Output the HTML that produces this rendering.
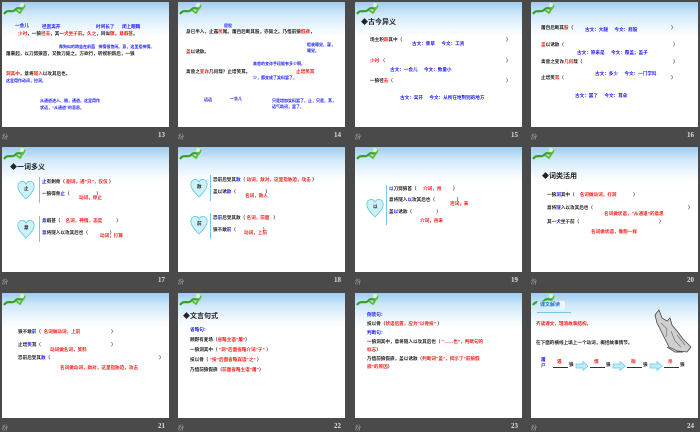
<!DOCTYPE html>
<html><head><meta charset="utf-8">
<style>
*{margin:0;padding:0;box-sizing:border-box}
body{width:700px;height:431px;background:#4a4a4a;position:relative;overflow:hidden;font-family:"Liberation Sans","Noto Sans CJK SC",sans-serif}
.s{position:absolute;width:167px;height:125px;background:linear-gradient(#9fcdef 0px,#cfe8f9 12px,#f4fafe 28px,#fff 36px);overflow:hidden}
.v{position:absolute;left:0;top:0}
.f{position:absolute;font-size:6px;color:#ccc;font-family:"Liberation Serif","Noto Serif CJK SC",serif}
.n{position:absolute;font-size:7px;color:#ddd;font-weight:bold;font-family:"Liberation Serif",serif}
.t{position:absolute;font-size:4.6px;white-space:nowrap;font-weight:bold;color:#222;line-height:1}
.b{color:#1a1aff}.r{color:#f5201a}
.h{font-size:7px;font-weight:bold}
.br{position:absolute;width:2px;border-left:1px solid #6ccbe6}
</style></head><body>
<svg width="0" height="0" style="position:absolute"><defs>
<g id="vine"><path d="M2 12 C6 6 10 12 14 7 C17 4 19 9 22 5" stroke="#3aa02a" stroke-width="2.2" fill="none"/><path d="M14 8 L18 11 L23 3" stroke="#58c030" stroke-width="1.8" fill="none"/><circle cx="20" cy="3" r="2" fill="#dff5c0"/></g>
<g id="heart"><path d="M9 19 C3 13 0 9 1 5 C2 1 7 0 9 4 C11 0 16 1 17 5 C18 9 15 13 9 19 Z" fill="#cdf2f8" stroke="#5ec8e2" stroke-width="0.8"/></g>
</defs></svg>

<!-- Row 1 -->
<div class="s" style="left:2px;top:2px"><svg class="v" width="26" height="14"><use href="#vine"/></svg>
<div class="t b" style="left:13px;top:22px">一会儿</div><div class="t b" style="left:40px;top:23px">径直离开</div><div class="t b" style="left:94px;top:23px">时间长了</div><div class="t b" style="left:120px;top:23px">闭上眼睛</div>
<div class="t" style="left:16px;top:30px"><span class="r">少时</span>，一狼<span class="r">径去</span>，其一<span class="r">犬坐于前</span>。<span class="r">久之</span>，目似<span class="r">瞑</span>，<span class="r">意暇甚</span>。</div>
<div class="t b" style="left:57px;top:43px;font-size:4px">像狗似的蹲坐在前面 &nbsp; 神情很悠闲。意，这里指神情。</div>
<div class="t" style="left:4px;top:50px">屠暴起，以刀劈狼首，又数刀毙之。方欲行，转视积薪后，一狼</div>
<div class="t" style="left:4px;top:70px"><span class="r">洞其中</span>，意将<span class="r">隧入</span>以攻其后也。</div>
<div class="t b" style="left:4px;top:77px;font-size:4px">这里用作动词，挖洞。</div>
<div class="t b" style="left:38px;top:97px;font-size:4px">从通道进入。隧，通道。这里用作</div><div class="t b" style="left:38px;top:104px;font-size:4px">状语，“从通道”的意思。</div>
</div>
<div class="f" style="left:2px;top:132px">汾</div><div class="n" style="left:158px;top:131px">13</div>

<div class="s" style="left:178px;top:2px"><svg class="v" width="26" height="14"><use href="#vine"/></svg>
<div class="t b" style="left:46px;top:22px;font-size:4px">屁股</div>
<div class="t" style="left:8px;top:28px">身已半入，止露<span class="r">尻</span>尾。屠自后断其股，亦毙之。乃悟前狼<span class="r">假寐</span>，</div>
<div class="t b" style="left:129px;top:41px;font-size:4px">假装睡觉。寐，</div><div class="t b" style="left:129px;top:47px;font-size:4px">睡觉。</div>
<div class="t" style="left:8px;top:48px"><span class="r">盖</span>以诱敌。</div>
<div class="t b" style="left:75px;top:60px;font-size:4px">禽兽的变诈手段能有多少啊。</div>
<div class="t" style="left:8px;top:68px">禽兽之<span class="r">变诈</span>几何哉？止增笑耳。</div><div class="t r" style="left:118px;top:68px">止增笑耳</div>
<div class="t b" style="left:75px;top:74px;font-size:4px">少，都变成了笑料罢了。</div>
<div class="t b" style="left:26px;top:96px;font-size:4px">语语</div><div class="t b" style="left:52px;top:95px;font-size:4px">一会儿</div>
<div class="t b" style="left:94px;top:97px;font-size:4px">只是增加笑料罢了。止，只是。耳，</div><div class="t b" style="left:94px;top:103px;font-size:4px">语气助词，罢了。</div>
</div>
<div class="f" style="left:178px;top:132px">汾</div><div class="n" style="left:334px;top:131px">14</div>

<div class="s" style="left:355px;top:2px"><svg class="v" width="26" height="14"><use href="#vine"/></svg>
<div class="t h" style="left:6px;top:17px">◆古今异义</div>
<div class="t" style="left:15px;top:36px">场主积<span class="r">薪</span>其中（</div><div class="t b" style="left:57px;top:40px">古文：柴草 &nbsp; &nbsp; 今文：工资</div><div class="t" style="left:151px;top:36px">）</div>
<div class="t r" style="left:15px;top:57px">少时 <span style="color:#222">（</span></div><div class="t" style="left:151px;top:57px">）</div>
<div class="t b" style="left:35px;top:66px">古文：一会儿 &nbsp; &nbsp; 今文：数量小</div>
<div class="t" style="left:15px;top:77px">一狼径<span class="r">去</span>（</div><div class="t" style="left:151px;top:77px">）</div>
<div class="t b" style="left:45px;top:94px">古文：离开 &nbsp; &nbsp; 今文：从所在地到别的地方</div>
</div>
<div class="f" style="left:355px;top:132px">汾</div><div class="n" style="left:511px;top:131px">15</div>

<div class="s" style="left:531px;top:2px"><svg class="v" width="26" height="14"><use href="#vine"/></svg>
<div class="t" style="left:10px;top:24px">屠自后断其<span class="r">股</span>（</div><div class="t b" style="left:54px;top:26px">古文：大腿 &nbsp; &nbsp; 今文：屁股</div><div class="t" style="left:140px;top:24px">）</div>
<div class="t" style="left:10px;top:41px"><span class="r">盖</span>以诱敌（</div><div class="t" style="left:142px;top:41px">）</div>
<div class="t b" style="left:46px;top:49px">古文：原来是 &nbsp; &nbsp; 今文：覆盖；盖子</div>
<div class="t" style="left:10px;top:58px">禽兽之变诈<span class="r">几何</span>哉（</div><div class="t" style="left:142px;top:58px">）</div>
<div class="t b" style="left:64px;top:70px">古文：多少 &nbsp; &nbsp; 今文：一门学科</div>
<div class="t" style="left:10px;top:74px">止增笑<span class="r">耳</span>（</div><div class="t" style="left:140px;top:74px">）</div>
<div class="t b" style="left:44px;top:92px">古文：罢了 &nbsp; &nbsp; 今文：耳朵</div>
</div>
<div class="f" style="left:531px;top:132px">汾</div><div class="n" style="left:687px;top:131px">16</div>

<!-- Row 2 -->
<div class="s" style="left:2px;top:147px"><svg class="v" width="26" height="14"><use href="#vine"/></svg>
<div class="t h" style="left:8px;top:17px">◆一词多义</div>
<svg style="position:absolute;left:15px;top:33px" width="19" height="21"><use href="#heart"/></svg><div class="t" style="left:22px;top:40px">止</div>
<div class="br" style="left:37px;top:30px;height:26px"></div>
<div class="t" style="left:40px;top:33px"><span class="b">止</span>有剩骨（ <span class="r">副词，通“只”，仅仅</span> ）</div>
<div class="t" style="left:40px;top:45px">一狼得骨<span class="b">止</span>（ &nbsp; &nbsp; &nbsp; &nbsp; &nbsp; &nbsp; &nbsp; &nbsp; &nbsp; &nbsp; ）</div>
<div class="t r" style="left:77px;top:49px">动词，停止</div>
<svg style="position:absolute;left:15px;top:72px" width="19" height="21"><use href="#heart"/></svg><div class="t" style="left:22px;top:79px">意</div>
<div class="br" style="left:37px;top:69px;height:26px"></div>
<div class="t" style="left:40px;top:72px"><span class="b">意</span>暇甚（ &nbsp; &nbsp;<span class="r">名词，神情，态度</span> &nbsp; &nbsp; &nbsp; &nbsp; &nbsp; ）</div>
<div class="t" style="left:40px;top:84px"><span class="b">意</span>将隧入以攻其后也（ &nbsp; &nbsp; &nbsp; &nbsp; &nbsp; &nbsp; &nbsp; &nbsp; ）</div>
<div class="t r" style="left:98px;top:87px">动词，打算</div>
</div>
<div class="f" style="left:2px;top:277px">汾</div><div class="n" style="left:158px;top:276px">17</div>

<div class="s" style="left:178px;top:147px"><svg class="v" width="26" height="14"><use href="#vine"/></svg>
<svg style="position:absolute;left:12px;top:31px" width="19" height="21"><use href="#heart"/></svg><div class="t" style="left:19px;top:38px">敌</div>
<div class="br" style="left:32px;top:28px;height:26px"></div>
<div class="t" style="left:35px;top:31px">恐前后受其<span class="b">敌</span>（ <span class="r">动词，敌对，这里指胁迫，攻击</span> ）</div>
<div class="t" style="left:35px;top:43px">盖以诱<span class="b">敌</span>（ &nbsp; &nbsp; &nbsp; &nbsp; &nbsp; &nbsp; &nbsp; &nbsp; &nbsp; &nbsp; &nbsp; ）</div>
<div class="t r" style="left:67px;top:47px">名词，敌人</div>
<svg style="position:absolute;left:12px;top:68px" width="19" height="21"><use href="#heart"/></svg><div class="t" style="left:19px;top:75px">前</div>
<div class="br" style="left:32px;top:66px;height:26px"></div>
<div class="t" style="left:35px;top:69px">恐<span class="b">前</span>后受其敌（ <span class="r">名词，前面</span> &nbsp; ）</div>
<div class="t" style="left:35px;top:81px">狼不敢<span class="b">前</span>（ &nbsp; &nbsp; &nbsp; &nbsp; &nbsp; &nbsp; &nbsp; &nbsp; &nbsp; &nbsp; ）</div>
<div class="t r" style="left:66px;top:84px">动词，上前</div>
</div>
<div class="f" style="left:178px;top:277px">汾</div><div class="n" style="left:334px;top:276px">18</div>

<div class="s" style="left:355px;top:147px"><svg class="v" width="26" height="14"><use href="#vine"/></svg>
<svg style="position:absolute;left:11px;top:51px" width="19" height="21"><use href="#heart"/></svg><div class="t" style="left:18px;top:58px">以</div>
<div class="br" style="left:31px;top:38px;height:40px"></div>
<div class="t" style="left:34px;top:40px"><span class="b">以</span>刀劈狼首（ &nbsp; &nbsp; <span class="r">介词，用</span> &nbsp; &nbsp; &nbsp; &nbsp; ）</div>
<div class="t" style="left:34px;top:51px">意将隧入<span class="b">以</span>攻其后也（ &nbsp; &nbsp; &nbsp; &nbsp; &nbsp; &nbsp; &nbsp; &nbsp; ）</div>
<div class="t r" style="left:95px;top:55px">连词，来</div>
<div class="t" style="left:34px;top:63px">盖<span class="b">以</span>诱敌（ &nbsp; &nbsp; &nbsp; &nbsp; &nbsp; &nbsp; &nbsp; &nbsp; &nbsp; ）</div>
<div class="t r" style="left:65px;top:72px">介词，用来</div>
</div>
<div class="f" style="left:355px;top:277px">汾</div><div class="n" style="left:511px;top:276px">19</div>

<div class="s" style="left:531px;top:147px"><svg class="v" width="26" height="14"><use href="#vine"/></svg>
<div class="t h" style="left:11px;top:26px">◆词类活用</div>
<div class="t" style="left:16px;top:46px">一狼<span class="b">洞</span>其中（ &nbsp; &nbsp;<span class="r">名词做动词，打洞</span> &nbsp; &nbsp; &nbsp; &nbsp; &nbsp; &nbsp; ）</div>
<div class="t" style="left:16px;top:59px">意将<span class="b">隧</span>入以攻其后也（</div><div class="t" style="left:157px;top:59px">）</div>
<div class="t r" style="left:73px;top:65px">名词做状语，“从通道”的意思</div>
<div class="t" style="left:16px;top:73px">其一<span class="b">犬</span>坐于前（</div><div class="t" style="left:128px;top:73px">）</div>
<div class="t r" style="left:60px;top:83px">名词做状语，像狗一样</div>
</div>
<div class="f" style="left:531px;top:277px">汾</div><div class="n" style="left:687px;top:276px">20</div>

<!-- Row 3 -->
<div class="s" style="left:2px;top:293px"><svg class="v" width="26" height="14"><use href="#vine"/></svg>
<div class="t" style="left:16px;top:37px">狼不敢<span class="b">前</span>（ &nbsp;<span class="r">名词做动词，上前</span></div><div class="t" style="left:109px;top:37px">）</div>
<div class="t" style="left:16px;top:50px">止增<span class="b">笑</span>耳（</div><div class="t" style="left:109px;top:50px">）</div>
<div class="t r" style="left:48px;top:55px">动词做名词，笑料</div>
<div class="t" style="left:16px;top:63px">恐前后受其<span class="b">敌</span>（</div><div class="t" style="left:157px;top:63px">）</div>
<div class="t r" style="left:58px;top:73px">名词做动词，敌对，这里指胁迫，攻击</div>
</div>
<div class="f" style="left:2px;top:423px">汾</div><div class="n" style="left:158px;top:422px">21</div>

<div class="s" style="left:178px;top:293px"><svg class="v" width="26" height="14"><use href="#vine"/></svg>
<div class="t h" style="left:5px;top:20px">◆文言句式</div>
<div class="t b" style="left:12px;top:35px">省略句：</div>
<div class="t" style="left:12px;top:45px">顾野有麦场（<span class="r">省略主语“屠”</span>）</div>
<div class="t" style="left:12px;top:55px">一狼洞其中（ <span class="r">“洞”后面省略介词“于”</span> ）</div>
<div class="t" style="left:12px;top:65px">投以骨（ <span class="r">“投”后面省略宾语“之”</span> ）</div>
<div class="t" style="left:12px;top:75px">乃悟前狼假寐（<span class="r">前面省略主语“屠”</span>）</div>
</div>
<div class="f" style="left:178px;top:423px">汾</div><div class="n" style="left:334px;top:422px">22</div>

<div class="s" style="left:355px;top:293px"><svg class="v" width="26" height="14"><use href="#vine"/></svg>
<div class="t b" style="left:12px;top:20px">倒装句：</div>
<div class="t" style="left:12px;top:29px">投以骨（<span class="r">状语后置，应为“以骨投”</span> ）</div>
<div class="t b" style="left:12px;top:38px">判断句：</div>
<div class="t" style="left:12px;top:47px">一狼洞其中，意将隧入以攻其后也（ <span class="r">“……也”，判断句的</span></div>
<div class="t r" style="left:12px;top:55px">标志<span style="color:#222">）</span></div>
<div class="t" style="left:12px;top:64px">乃悟前狼假寐，盖以诱敌（<span class="r">判断词“盖”，揭示了“前狼假</span></div>
<div class="t r" style="left:12px;top:72px">寐”的原因<span style="color:#222">）</span></div>
</div>
<div class="f" style="left:355px;top:423px">汾</div><div class="n" style="left:511px;top:422px">23</div>

<div class="s" style="left:531px;top:293px"><svg class="v" width="26" height="14"><use href="#vine"/></svg>
<div style="position:absolute;left:6px;top:8px;width:28px;height:9px;background:linear-gradient(90deg,#cfeaf8,#eef8fd);border-radius:2px"></div>
<div class="t" style="left:9px;top:10px;color:#1a6ecc;font-size:5px">课文解读</div>
<div style="position:absolute;left:6px;top:19px;width:34px;height:1px;background:#7cc4e6"></div>
<div class="t r" style="left:5px;top:29px">齐读课文，理清故事结构。</div>
<div class="t" style="left:5px;top:48px">在下面的横线上填上一个动词，概括故事情节。</div>
<svg style="position:absolute;left:122px;top:16px" width="40" height="44" viewBox="0 0 40 44"><path d="M6 1 L9 9 L14 12 L17 9 L19 16 L24 22 L30 30 L38 38 L34 43 L24 42 L16 38 L12 30 L8 22 L4 14 L2 6 Z" fill="#cfcfcf" stroke="#444" stroke-width="0.8"/><path d="M8 14 L14 20 L13 28 M18 22 L22 32 L28 38 M24 26 L32 36" stroke="#777" stroke-width="0.7" fill="none"/><path d="M14 38 L22 43 L30 43" stroke="#555" stroke-width="1" fill="none"/></svg>
<div class="t b" style="left:10px;top:65px">屠</div><div class="t b" style="left:10px;top:71px">户</div>
<div style="position:absolute;left:22px;top:74px;width:15px;border-top:1px solid #333"></div><div class="t r" style="left:26px;top:67px">遇</div><div class="t" style="left:38px;top:70px">狼</div>
<svg style="position:absolute;left:44px;top:68px" width="14" height="10"><path d="M1 3 H8 V0.5 L13 5 L8 9.5 V7 H1 Z" fill="#bfeefa" stroke="#5cc8e2" stroke-width="0.7"/></svg>
<div style="position:absolute;left:59px;top:74px;width:15px;border-top:1px solid #333"></div><div class="t r" style="left:63px;top:67px">惧</div><div class="t" style="left:75px;top:70px">狼</div>
<svg style="position:absolute;left:81px;top:68px" width="14" height="10"><path d="M1 3 H8 V0.5 L13 5 L8 9.5 V7 H1 Z" fill="#bfeefa" stroke="#5cc8e2" stroke-width="0.7"/></svg>
<div style="position:absolute;left:96px;top:74px;width:15px;border-top:1px solid #333"></div><div class="t r" style="left:100px;top:67px">御</div><div class="t" style="left:112px;top:70px">狼</div>
<svg style="position:absolute;left:118px;top:68px" width="14" height="10"><path d="M1 3 H8 V0.5 L13 5 L8 9.5 V7 H1 Z" fill="#bfeefa" stroke="#5cc8e2" stroke-width="0.7"/></svg>
<div style="position:absolute;left:133px;top:74px;width:15px;border-top:1px solid #333"></div><div class="t r" style="left:137px;top:67px">杀</div><div class="t" style="left:149px;top:70px">狼</div>
</div>
<div class="f" style="left:531px;top:423px">汾</div><div class="n" style="left:687px;top:422px">24</div>
</body></html>
